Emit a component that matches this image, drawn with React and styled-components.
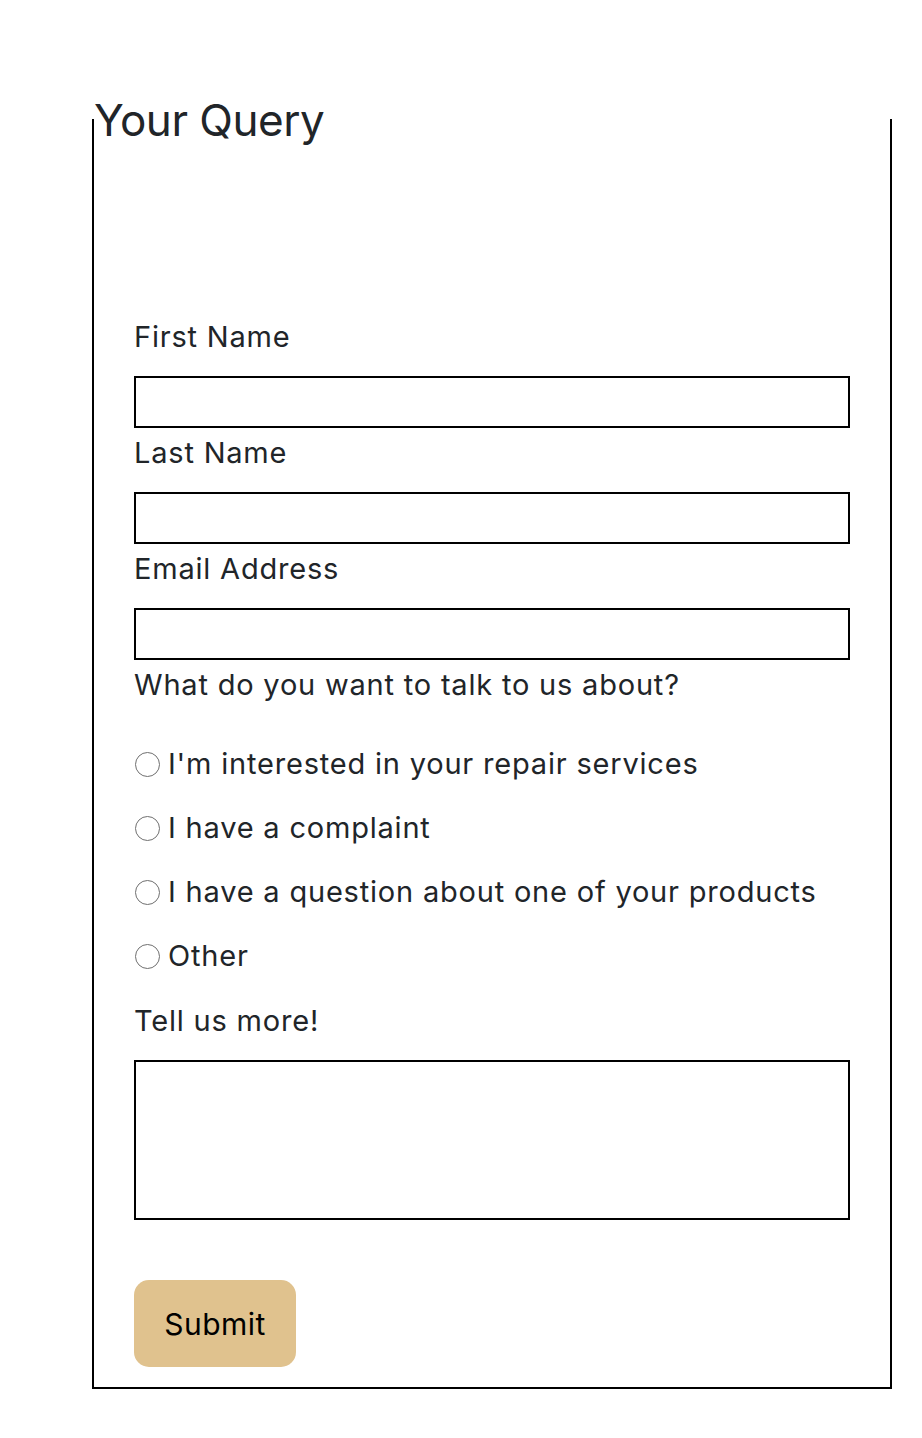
import React from "react";
import styled, { createGlobalStyle } from "styled-components";

const GlobalStyle = createGlobalStyle`
  body {
    margin: 0;
    background: #fff;
    font-family: Inter, "Noto Sans", sans-serif;
    color: #212529;
  }
`;

const Page = styled.div`
  padding: 94px 30px 49px 92px;
`;

const QueryBox = styled.fieldset`
  margin: 0;
  padding: 0 40px 20px 40px;
  border: 2px solid #000;
  min-width: 0;
`;

const Legend = styled.legend`
  width: calc(100% + 80px);
  padding: 0;
  margin-left: -40px;
  font-size: 44px;
  line-height: 52px;
  letter-spacing: -0.5px;
  color: #212529;
`;

const Form = styled.form`
  display: flex;
  flex-direction: column;
  padding-top: 175px;
`;

const Label = styled.label`
  display: block;
  margin: 0 0 23px;
  font-size: 29px;
  line-height: 32px;
  letter-spacing: 0.8px;
`;

const Question = styled(Label).attrs({ as: "p" })`
  margin-bottom: 24px;
`;

const TextInput = styled.input`
  display: block;
  box-sizing: border-box;
  width: 100%;
  height: 52px;
  margin: 0 0 9px;
  border: 2px solid #000;
  border-radius: 0;
  font-size: 24px;
  font-family: inherit;
`;

const Options = styled.div`
  display: flex;
  flex-direction: column;
  gap: 32px;
  margin: 23px 0 33px;
`;

const Option = styled.label`
  display: flex;
  align-items: center;
  font-size: 29px;
  line-height: 32px;
  letter-spacing: 0.8px;
`;

const Radio = styled.input`
  appearance: none;
  box-sizing: border-box;
  width: 25px;
  height: 25px;
  margin: 0 8px 0 1px;
  border: 1.75px solid #6f6f6f;
  border-radius: 50%;
  background: #fff;
  &:checked {
    border: 7px solid #0a66d8;
  }
`;

const TextArea = styled.textarea`
  display: block;
  box-sizing: border-box;
  width: 100%;
  height: 160px;
  margin: 0;
  border: 2px solid #000;
  resize: none;
  font-size: 24px;
  font-family: inherit;
`;

const Submit = styled.button`
  align-self: flex-start;
  width: 162px;
  height: 87px;
  margin-top: 60px;
  border: none;
  border-radius: 15px;
  background: #e0c28e;
  color: #000;
  font-family: inherit;
  font-size: 30px;
  letter-spacing: 0.5px;
  cursor: pointer;
`;

const topics = [
  "I'm interested in your repair services",
  "I have a complaint",
  "I have a question about one of your products",
  "Other",
];

export default function App() {
  return (
    <>
      <GlobalStyle />
      <Page>
        <QueryBox>
          <Legend>Your Query</Legend>
          <Form onSubmit={(e) => e.preventDefault()}>
            <Label htmlFor="first">First Name</Label>
            <TextInput id="first" type="text" />
            <Label htmlFor="last">Last Name</Label>
            <TextInput id="last" type="text" />
            <Label htmlFor="email">Email Address</Label>
            <TextInput id="email" type="email" />
            <Question>What do you want to talk to us about?</Question>
            <Options>
              {topics.map((topic) => (
                <Option key={topic}>
                  <Radio type="radio" name="topic" value={topic} />
                  {topic}
                </Option>
              ))}
            </Options>
            <Label htmlFor="more">Tell us more!</Label>
            <TextArea id="more" />
            <Submit type="submit">Submit</Submit>
          </Form>
        </QueryBox>
      </Page>
    </>
  );
}
